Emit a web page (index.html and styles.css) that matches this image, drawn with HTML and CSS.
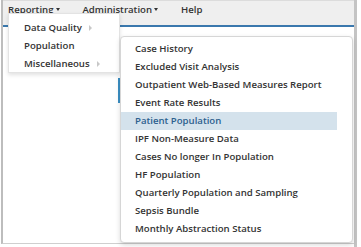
FILE: index.html
```html
<!DOCTYPE html>
<html>
<head>
<meta charset="utf-8">
<link rel="stylesheet" href="styles.css">
</head>
<body>
<div class="screen">
  <div class="page">
    <nav class="menubar">
      <div class="menu-item">Reporting<span class="caret"></span></div>
      <div class="menu-item">Administration<span class="caret"></span></div>
      <div class="menu-item">Help</div>
    </nav>
    <div class="content">
      <div class="panel">
        <div class="panel-bar"></div>
      </div>
    </div>
    <ul class="dropdown">
      <li>Data Quality<span class="arrow"></span></li>
      <li>Population</li>
      <li>Miscellaneous<span class="arrow"></span></li>
    </ul>
    <ul class="submenu">
      <li>Case History</li>
      <li>Excluded Visit Analysis</li>
      <li>Outpatient Web-Based Measures Report</li>
      <li>Event Rate Results</li>
      <li class="active">Patient Population</li>
      <li>IPF Non-Measure Data</li>
      <li>Cases No longer In Population</li>
      <li>HF Population</li>
      <li>Quarterly Population and Sampling</li>
      <li>Sepsis Bundle</li>
      <li>Monthly Abstraction Status</li>
    </ul>
  </div>
  <div class="scrollbar"></div>
</div>
</body>
</html>
```

FILE: styles.css
```css
* { box-sizing: border-box; }
html, body {
  margin: 0;
  padding: 0;
  background: #ffffff;
}
body {
  font-family: "Open Sans", "Liberation Sans", sans-serif;
  font-size: 9.6px;
  font-weight: 600;
  color: #333333;
}
.screen {
  display: flex;
  width: 361px;
  height: 247px;
  overflow: hidden;
}
.page {
  position: relative;
  width: 353px;
  height: 244px;
  border-left: 2px solid #bdbdbd;
  border-bottom: 1px solid #cfcfcf;
  margin-left: 1px;
  display: flex;
  flex-direction: column;
}
.menubar {
  height: 27px;
  background: #efefef;
  border-top: 1px solid #dcdcdc;
  border-bottom: 2px solid #3a78ad;
  display: flex;
  align-items: flex-start;
  padding-left: 5px;
  padding-top: 1px;
}
.menu-item {
  display: flex;
  align-items: center;
  height: 14px;
  color: #333;
  margin-right: 23px;
}
.caret {
  width: 0;
  height: 0;
  border-left: 2.5px solid transparent;
  border-right: 2.5px solid transparent;
  border-top: 3px solid #333;
  margin-left: 2px;
  margin-top: 1px;
}
.content {
  flex: 1;
  padding: 51px 0 0 115px;
}
.panel {
  width: 200px;
}
.panel-bar {
  height: 25px;
  background: #3b8fc4;
}
.scrollbar {
  width: 3px;
  height: 247px;
  background: #c4c4c4;
}
ul {
  list-style: none;
  margin: 0;
}
.dropdown {
  position: absolute;
  left: 5px;
  top: 13px;
  width: 112px;
  height: 60px;
  padding: 5px 0 0 15px;
  background: #fff;
  border: 1px solid #e3e3e3;
  box-shadow: 0 2px 4px rgba(0,0,0,0.12);
  z-index: 2;
}
.dropdown li {
  height: 18px;
  line-height: 18px;
  display: flex;
  align-items: center;
}
.arrow {
  width: 0;
  height: 0;
  border-top: 3px solid transparent;
  border-bottom: 3px solid transparent;
  border-left: 3px solid #c8c8c8;
  margin-left: 7px;
}
.submenu {
  position: absolute;
  left: 117px;
  top: 36px;
  width: 233px;
  height: 207px;
  padding: 3px 15px 3px 0;
  background: #fff;
  border: 1px solid #d6d6d6;
  border-radius: 4px;
  box-shadow: 0 2px 5px rgba(0,0,0,0.15);
  z-index: 3;
}
.submenu li {
  height: 18px;
  line-height: 18px;
  padding-left: 14px;
  white-space: nowrap;
}
.submenu li.active {
  background: #d4e2ec;
  color: #2c5f8e;
}
```
